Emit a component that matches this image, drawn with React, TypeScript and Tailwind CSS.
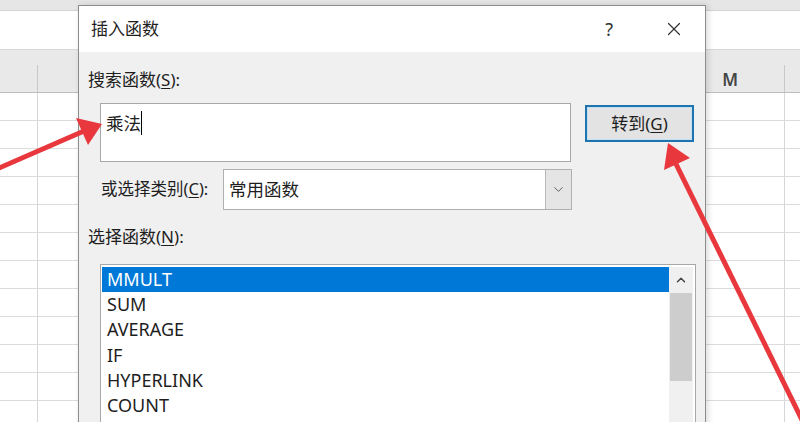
import { ChevronDown, ChevronUp, X } from 'lucide-react';

const cjk = '"Segoe UI", "Noto Sans", "Noto Sans CJK SC", sans-serif';

const functions = ['MMULT', 'SUM', 'AVERAGE', 'IF', 'HYPERLINK', 'COUNT'];

const Sheet = () => {
  const rows = Array.from({ length: 12 });
  return (
    <div className="w-[800px] h-[422px] bg-white flex flex-col">
      <div className="h-[11px] shrink-0 bg-[#e6e6e6] border-b border-[#d4d4d4]" />
      <div className="h-[39px] shrink-0 bg-white border-b border-[#d8d8d8]" />
      <div className="h-[43px] shrink-0 bg-[#e9e9e9] border-b border-[#bdbdbd] flex">
        <div className="w-[38px] border-r border-[#c8c8c8] mt-[15px]" />
        <div className="w-[747px] border-r border-[#c8c8c8] mt-[15px] flex items-start justify-end pr-[46px]">
          <span className="text-[17px] leading-[20px] text-[#444] font-semibold mt-[5px]" style={{ fontFamily: cjk }}>M</span>
        </div>
      </div>
      {rows.map((_, i) => (
        <div key={i} className="h-[28px] shrink-0 border-b border-[#dcdcdc] flex">
          <div className="w-[38px] border-r border-[#d6d6d6]" />
          <div className="w-[747px] border-r border-[#d6d6d6]" />
        </div>
      ))}
    </div>
  );
};

const U = ({ children }: { children: string }) => <span className="underline underline-offset-2">{children}</span>;

const Dialog = () => (
  <div
    className="absolute left-[78px] top-[5px] w-[628px] h-[440px] bg-[#f0f0f0] border border-[#8c8c8c] shadow-[2px_0_6px_rgba(0,0,0,0.15)] flex flex-col text-[#1e1e1e]"
    style={{ fontFamily: cjk }}
  >
    <div className="h-[46px] bg-white flex items-center shrink-0">
      <span className="ml-[12px] text-[17px]">插入函数</span>
      <span className="ml-auto mr-[50px] text-[18px] text-[#333]">?</span>
      <X className="mr-[20px] w-[22px] h-[22px] text-[#333]" strokeWidth={1.3} />
    </div>
    <div className="pl-[9px] pt-[17px] text-[17px] leading-[22px]">
      搜索函数(<U>S</U>):
    </div>
    <div className="flex items-start pl-[21px] mt-[12px]">
      <div className="w-[471px] h-[59px] bg-white border border-[#a8a8a8] px-[5px] pt-[7px] text-[17.5px] leading-[24px] flex items-start">
        <span>乘法</span>
        <span className="w-px h-[24px] bg-black" />
      </div>
      <div className="ml-[14px] mt-[2px] w-[109px] h-[37px] border-2 border-[#1f74b0] bg-[#e3e3e3] shadow-[inset_0_0_0_1px_#bfe3f5] flex items-center justify-center text-[17px]">
        转到(<U>G</U>)
      </div>
    </div>
    <div className="flex items-center pl-[22px] mt-[7px]">
      <span className="w-[122px] text-[16.5px]">或选择类别(<U>C</U>):</span>
      <div className="w-[349px] h-[41px] bg-white border border-[#b0b0b0] flex">
        <span className="flex-1 pl-[5px] text-[17.5px] leading-[38px]">常用函数</span>
        <div className="w-[26px] bg-[#e5e5e5] border-l border-[#b8b8b8] flex items-center justify-center">
          <ChevronDown className="w-[15px] h-[15px] text-[#555]" strokeWidth={1.5} />
        </div>
      </div>
    </div>
    <div className="pl-[9px] mt-[16px] text-[17px] leading-[22px]">
      选择函数(<U>N</U>):
    </div>
    <div className="ml-[21px] mt-[16px] w-[596px] flex-1 bg-white border border-[#a8a8a8] flex pt-[2px] pl-[1px]">
      <div className="flex-1 flex flex-col">
        {functions.map((f, i) => (
          <div
            key={f}
            className={`h-[25.2px] pl-[5px] text-[18px] leading-[25px] ${i === 0 ? 'bg-[#0078d7] text-white' : ''}`}
          >
            {f}
          </div>
        ))}
      </div>
      <div className="w-[24px] flex flex-col bg-[#f0f0f0] mr-[2px]">
        <div className="h-[26px] flex items-center justify-center">
          <ChevronUp className="w-[14px] h-[14px] text-[#444]" strokeWidth={2.5} />
        </div>
        <div className="mx-[1px] h-[88px] bg-[#cdcdcd]" />
      </div>
    </div>
  </div>
);

const Arrows = () => (
  <svg className="absolute inset-0 pointer-events-none" width="800" height="422" viewBox="0 0 800 422">
    <g fill="#e8383d" stroke="#e8383d">
      <line x1="-10" y1="172" x2="84" y2="131" strokeWidth="5" />
      <polygon points="102,124 76,118 88,145" stroke="none" />
      <line x1="676" y1="164" x2="806" y2="428" strokeWidth="5" />
      <polygon points="668,143 664,170 690,158" stroke="none" />
    </g>
  </svg>
);

export default function App() {
  return (
    <div className="relative w-[800px] h-[422px] overflow-hidden">
      <Sheet />
      <Dialog />
      <Arrows />
    </div>
  );
}
